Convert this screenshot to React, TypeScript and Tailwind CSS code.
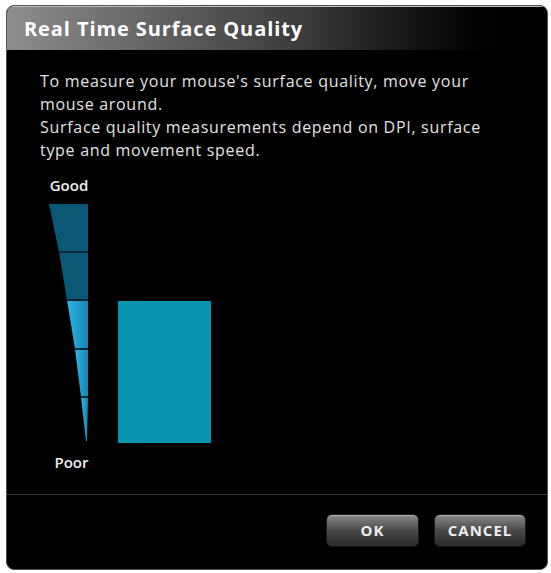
import React from 'react';

const Meter: React.FC = () => (
  <svg width="44" height="240" viewBox="0 0 44 240" className="block">
    <defs>
      <linearGradient id="lit" x1="0" y1="0" x2="1" y2="0">
        <stop offset="0" stopColor="#2bb8e6" />
        <stop offset="1" stopColor="#1784b0" />
      </linearGradient>
    </defs>
    <polygon points="1,0 40,0 40,48 11,48" fill="#0b5776" />
    <polygon points="11,48 40,48 40,96 19,96" fill="#0b5776" />
    <polygon points="19,96 40,96 40,145 27,145" fill="url(#lit)" />
    <polygon points="27,145 40,145 40,193 33,193" fill="url(#lit)" />
    <polygon points="33,193 40,193 39,237 38,237" fill="url(#lit)" />
    <line x1="10" y1="48" x2="40" y2="48" stroke="#06263a" strokeWidth="2" />
    <line x1="18" y1="96" x2="40" y2="96" stroke="#06263a" strokeWidth="2" />
    <line x1="26" y1="145" x2="40" y2="145" stroke="#06263a" strokeWidth="2" />
    <line x1="32" y1="193" x2="40" y2="193" stroke="#06263a" strokeWidth="2" />
  </svg>
);

const DialogButton: React.FC<{ label: string; width: string }> = ({ label, width }) => (
  <button
    className={`${width} h-[33px] rounded-[6px] border border-[#1a1a1a] bg-gradient-to-b from-[#8a8a8a] via-[#4a4a4a] to-[#2a2a2a] text-[15px] font-bold tracking-[1px] text-[#eeeeee] shadow-[inset_0_1px_0_rgba(255,255,255,0.35)]`}
  >
    {label}
  </button>
);

const App: React.FC = () => {
  return (
    <div className="w-[551px] h-[573px] bg-white pt-[5px] pl-[6px]" style={{ fontFamily: '"Open Sans", sans-serif' }}>
      <div className="w-[542px] h-[565px] bg-black rounded-[8px] border border-[#555] overflow-hidden flex flex-col">
        {/* Title bar */}
        <div className="h-[44px] shrink-0 flex items-center pl-[17px] bg-gradient-to-r from-[#8e8e8e] via-[#3a3a3a] via-55% to-black border-t border-[#bdbdbd]">
          <h1 className="text-[20px] font-bold text-white tracking-[0.9px]">Real Time Surface Quality</h1>
        </div>

        {/* Body */}
        <div className="flex-1 pl-[33px] pt-[20px]">
          <p className="text-[16px] leading-[23px] text-[#e2e2e2] tracking-[0.7px] w-[460px]">
            To measure your mouse's surface quality, move your mouse around.
            <br />
            Surface quality measurements depend on DPI, surface type and movement speed.
          </p>

          <div className="mt-[12px] flex items-end">
            <div className="flex flex-col items-center w-[52px]">
              <span className="ml-[6px] mt-[2px] text-[15px] font-semibold text-[#eeeeee] leading-[18px]">Good</span>
              <div className="mt-[10px] ml-[7px]">
                <Meter />
              </div>
              <span className="mt-[9px] ml-[11px] text-[15px] font-semibold text-[#eeeeee] leading-[18px]">Poor</span>
            </div>
            <div className="ml-[26px] mb-[28px] w-[93px] h-[142px] bg-[#0a93b0]" />
          </div>
        </div>

        {/* Footer */}
        <div className="h-[75px] shrink-0 border-t border-[#3c3c3c] flex items-start justify-end gap-[15px] pt-[19px] pr-[21px]">
          <DialogButton label="OK" width="w-[93px]" />
          <DialogButton label="CANCEL" width="w-[92px]" />
        </div>
      </div>
    </div>
  );
};

export default App;
